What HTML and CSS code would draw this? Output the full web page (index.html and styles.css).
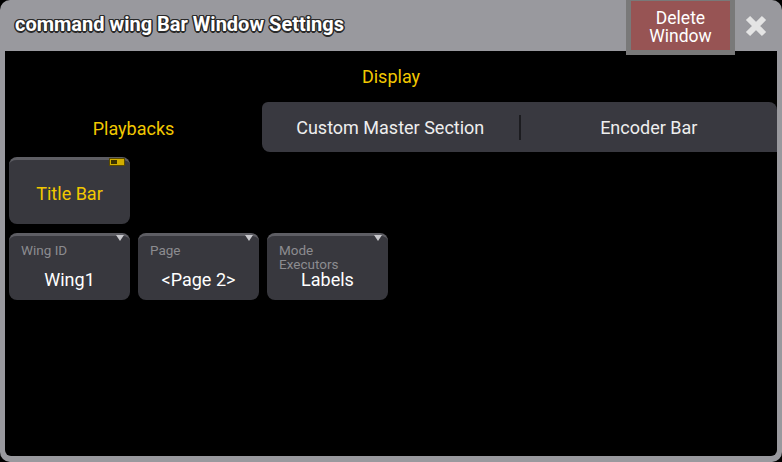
FILE: index.html
```html
<!DOCTYPE html>
<html lang="en">
<head>
    <meta charset="UTF-8">
    <meta name="viewport" content="width=device-width, initial-scale=1.0">
    <title>command wing Bar Window Settings</title>
    <link rel="stylesheet" href="styles.css">
</head>
<body>
    <div class="window">
        <div class="titlebar">
            <div class="title">command wing Bar Window Settings</div>
            <div class="delete">Delete<br>Window</div>
            <div class="close">
                <svg width="22" height="22" viewBox="0 0 22 22">
                    <path d="M3 3 L19 19 M19 3 L3 19" stroke="#e4e4e4" stroke-width="6"/>
                </svg>
            </div>
        </div>
        <div class="content">
            <div class="section">Display</div>
            <div class="tabs">
                <div class="tab active">Playbacks</div>
                <div class="tab-rest">
                    <div class="tab">Custom Master Section</div>
                    <div class="sep"></div>
                    <div class="tab">Encoder Bar</div>
                </div>
            </div>
            <div class="grid">
                <div class="btn toggle">
                    <span class="switch"><i></i></span>
                    Title Bar
                </div>
                <div class="empty"></div>
                <div class="empty"></div>
                <div class="btn select">
                    <span class="arrow"></span>
                    <div class="label">Wing ID</div>
                    <div class="value">Wing1</div>
                </div>
                <div class="btn select">
                    <span class="arrow"></span>
                    <div class="label">Page</div>
                    <div class="value">&lt;Page 2&gt;</div>
                </div>
                <div class="btn select">
                    <span class="arrow"></span>
                    <div class="label">Mode<br>Executors</div>
                    <div class="value">Labels</div>
                </div>
            </div>
        </div>
    </div>
</body>
</html>
```

FILE: styles.css
```css
body {
    margin: 0;
    padding: 0;
    background-color: #000;
    font-family: Roboto, "Liberation Sans", sans-serif;
}
.window {
    width: 782px;
    height: 462px;
    box-sizing: border-box;
    background-color: #99999e;
    border-radius: 10px;
    padding: 0 5px 6px;
    display: flex;
    flex-direction: column;
}
.titlebar {
    height: 51px;
    display: flex;
    align-items: flex-start;
    flex-shrink: 0;
}
.title {
    flex: 1;
    padding-left: 10px;
    line-height: 49px;
    font-size: 20px;
    font-weight: bold;
    color: #fff;
    text-shadow: -1px -1px 0 #2a2a2a, 1px -1px 0 #2a2a2a, -1px 1px 0 #2a2a2a, 1px 1px 0 #2a2a2a,
                 0 -1.5px 0 #2a2a2a, 0 1.5px 0 #2a2a2a, -1.5px 0 0 #2a2a2a, 1.5px 0 0 #2a2a2a;
}
.delete {
    width: 109px;
    height: 55px;
    box-sizing: border-box;
    margin-bottom: -4px;
    position: relative;
    z-index: 1;
    border: 5px solid #797979;
    border-top-width: 1px;
    background-color: #975454;
    color: #fff;
    font-size: 17.5px;
    line-height: 18px;
    text-align: center;
    padding-top: 8px;
}
.close {
    width: 42px;
    height: 51px;
    display: flex;
    align-items: center;
    justify-content: center;
}
.content {
    flex: 1;
    background-color: #000;
    border-radius: 0 0 6px 6px;
    display: flex;
    flex-direction: column;
}
.section {
    height: 51px;
    line-height: 52px;
    text-align: center;
    color: #f2c800;
    font-size: 18px;
}
.tabs {
    height: 50px;
    display: flex;
}
.tab {
    flex: 1;
    line-height: 53px;
    text-align: center;
    color: #eee;
    font-size: 18px;
}
.tab.active {
    flex: 0 0 257px;
    color: #f2c800;
}
.tab-rest {
    flex: 1;
    display: flex;
    align-items: center;
    background-color: #393940;
    border-radius: 6px 8px 0 8px;
}
.sep {
    width: 2px;
    height: 25px;
    background-color: #1c1c20;
}
.grid {
    display: grid;
    grid-template-columns: repeat(3, 121px);
    grid-template-rows: 67px 67px;
    column-gap: 8px;
    row-gap: 9px;
    padding: 5px 4px;
}
.btn {
    position: relative;
    background-color: #38383e;
    border-radius: 8px;
    border-top: 3px solid #5e5e64;
    box-sizing: border-box;
    color: #fff;
    font-size: 18px;
}
.toggle {
    display: flex;
    align-items: center;
    justify-content: center;
    color: #f2c800;
    padding-top: 3px;
}
.switch {
    position: absolute;
    top: -2px;
    right: 5px;
    width: 16px;
    height: 8px;
    box-sizing: border-box;
    background-color: #d2ae00;
    border: 1px solid #5a4a00;
}
.switch i {
    position: absolute;
    left: 1px;
    top: 1px;
    width: 6px;
    height: 4px;
    background-color: #3a3200;
}
.arrow {
    position: absolute;
    top: -1px;
    right: 6px;
    width: 0;
    height: 0;
    border-left: 4px solid transparent;
    border-right: 4px solid transparent;
    border-top: 6px solid #c8c8cc;
}
.label {
    position: absolute;
    left: 12px;
    top: 7px;
    font-size: 13.5px;
    line-height: 14px;
    color: #8c8c90;
}
.value {
    position: absolute;
    left: 0;
    right: 0;
    top: 35px;
    text-align: center;
    line-height: 18px;
}
```
